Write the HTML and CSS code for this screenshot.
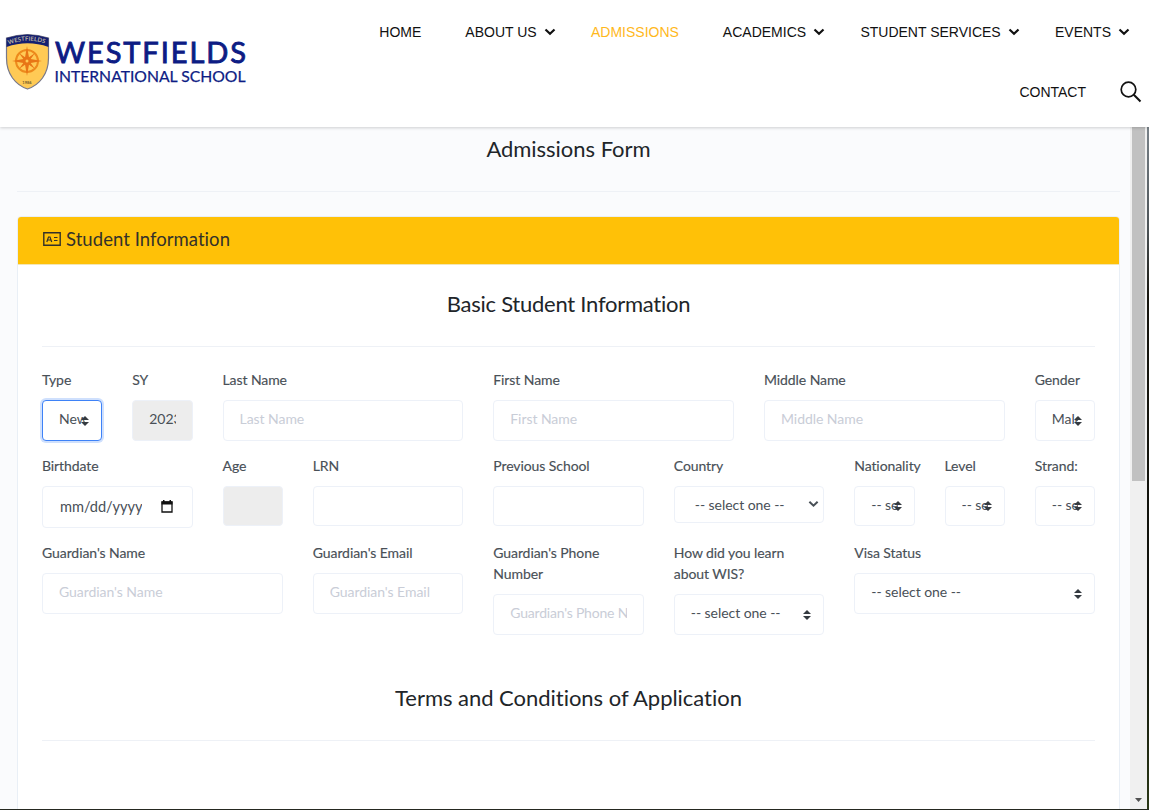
FILE: index.html
```html
<!DOCTYPE html>
<html lang="en">
<head>
<meta charset="utf-8">
<title>Admissions Form</title>
<link rel="stylesheet" href="styles.css">
</head>
<body>
<svg width="0" height="0" class="defs">
  <symbol id="sort" viewBox="0 0 8 10"><path d="M4 0 8 4H0zM0 6h8L4 10z" fill="#343a40"/></symbol>
  <symbol id="chev" viewBox="0 0 12 8"><path d="M1.500 1.500 6 5.800l4.500-4.300" fill="none" stroke="currentColor" stroke-width="2.200"/></symbol>
</svg>
<header class="header">
  <svg class="logo" width="250" height="64" viewBox="0 0 250 64">
    <path d="M6.500 7Q27.500 0 48.500 7V27C48.500 43 39.500 54 27.500 58C15.500 54 6.500 43 6.500 27Z" fill="#ffca55" stroke="#77788a" stroke-width="1.200"/>
    <path d="M6.500 7Q27.500 0 48.500 7V16Q27.500 8.500 6.500 16Z" fill="#152070"/>
    <path id="arc" d="M8.500 13.500Q27.500 6 47.500 13.500" fill="none"/>
    <text class="crest-text" textLength="37" lengthAdjust="spacingAndGlyphs"><textPath href="#arc">WESTFIELDS</textPath></text>
    <circle cx="27" cy="30" r="11" fill="none" stroke="#ed8a1c" stroke-width="2"/>
    <path d="M27 15l2.200 12.800L42 30l-12.800 2.200L27 45l-2.200-12.800L12 30l12.800-2.200z" fill="#e87516"/>
    <path d="M19 22l7 5 1 3-3-1zM35 22l-5 7-3 1 1-3zM19 38l5-7 3-1-1 3zM35 38l-7-5-1-3 3 1z" fill="#e87516"/>
    <circle cx="27" cy="30" r="1.500" fill="#ffca55"/>
    <text x="27" y="53" class="crest-year" text-anchor="middle">1986</text>
    <text x="55" y="31.500" class="logo-a" textLength="191">WESTFIELDS</text>
    <text x="54.500" y="51" class="logo-b" textLength="191" lengthAdjust="spacingAndGlyphs">INTERNATIONAL SCHOOL</text>
  </svg>
  <nav class="nav">
    <div class="nav-row">
      <a class="item">HOME</a>
      <a class="item drop">ABOUT US<svg width="12" height="8"><use href="#chev"/></svg></a>
      <a class="item active">ADMISSIONS</a>
      <a class="item drop">ACADEMICS<svg width="12" height="8"><use href="#chev"/></svg></a>
      <a class="item drop">STUDENT SERVICES<svg width="12" height="8"><use href="#chev"/></svg></a>
      <a class="item drop">EVENTS<svg width="12" height="8"><use href="#chev"/></svg></a>
    </div>
    <div class="nav-row second">
      <a class="item">CONTACT</a>
      <svg class="search" width="22" height="22" viewBox="0 0 22 22"><circle cx="8.500" cy="8.500" r="7.300" fill="none" stroke="#111" stroke-width="1.700"/><path d="M13.800 13.800 20.500 20.500" stroke="#111" stroke-width="2"/></svg>
    </div>
  </nav>
</header>
<div class="view">
  <main class="main">
    <h1 class="title t-adm">Admissions Form</h1>
    <hr class="rule page-rule">
    <section class="card">
      <div class="card-head">
        <svg width="18" height="14" viewBox="0 0 18 14" fill="none" stroke="#33312a"><path d="M.8.8h16.400v12.400H.8z" stroke-width="1.400"/><path d="M3.800 10 5.500 5H7l1.700 5M4.800 8h3" stroke-width="1.200"/><path d="M11 5.500h3.500M11 8.500h3.500" stroke-width="1.200"/></svg>
        <span class="head-text">Student Information</span>
      </div>
      <div class="card-body">
        <h2 class="title t-basic">Basic Student Information</h2>
        <hr class="rule">
        <form class="form">
          <div class="row">
            <div class="f s1"><label>Type</label><div class="c focus"><span class="val">New</span><svg class="sort" width="8" height="10"><use href="#sort"/></svg></div></div>
            <div class="f s1"><label>SY</label><div class="c gray"><span class="val sy">2023</span></div></div>
            <div class="f s3"><label>Last Name</label><input class="c" placeholder="Last Name"></div>
            <div class="f s3"><label>First Name</label><input class="c" placeholder="First Name"></div>
            <div class="f s3"><label>Middle Name</label><input class="c" placeholder="Middle Name"></div>
            <div class="f s1"><label>Gender</label><div class="c"><span class="val">Male</span><svg class="sort" width="8" height="10"><use href="#sort"/></svg></div></div>
          </div>
          <div class="row row2">
            <div class="f s2"><label>Birthdate</label><div class="c date"><span class="val">mm/dd/yyyy</span><svg width="12" height="13" viewBox="0 0 12 13"><path d="M1 2h10v10H1z" fill="none" stroke="#111" stroke-width="1.300"/><path d="M.5 1.500h11v3H.5zM2 0h1.500v2H2zM8.500 0H10v2H8.500z" fill="#111"/></svg></div></div>
            <div class="f s1"><label>Age</label><div class="c gray"></div></div>
            <div class="f s2"><label>LRN</label><input class="c"></div>
            <div class="f s2"><label>Previous School</label><input class="c"></div>
            <div class="f s2"><label>Country</label><div class="c country"><span class="val">-- select one --</span><svg width="11" height="8"><use href="#chev"/></svg></div></div>
            <div class="f s1"><label>Nationality</label><div class="c"><span class="val">-- select one --</span><svg class="sort" width="8" height="10"><use href="#sort"/></svg></div></div>
            <div class="f s1"><label>Level</label><div class="c"><span class="val">-- select one --</span><svg class="sort" width="8" height="10"><use href="#sort"/></svg></div></div>
            <div class="f s1"><label>Strand:</label><div class="c"><span class="val">-- select one --</span><svg class="sort" width="8" height="10"><use href="#sort"/></svg></div></div>
          </div>
          <div class="row">
            <div class="f s3"><label>Guardian's Name</label><input class="c" placeholder="Guardian's Name"></div>
            <div class="f s2"><label>Guardian's Email</label><input class="c" placeholder="Guardian's Email"></div>
            <div class="f s2"><label>Guardian's Phone<br>Number</label><input class="c tight" placeholder="Guardian's Phone Number"></div>
            <div class="f s2"><label>How did you learn<br>about WIS?</label><div class="c"><span class="val">-- select one --</span><svg class="sort" width="8" height="10"><use href="#sort"/></svg></div></div>
            <div class="f s3"><label>Visa Status</label><div class="c"><span class="val">-- select one --</span><svg class="sort" width="8" height="10"><use href="#sort"/></svg></div></div>
          </div>
        </form>
        <h2 class="title t-terms">Terms and Conditions of Application</h2>
        <hr class="rule">
      </div>
    </section>
  </main>
  <div class="scroll"><div class="thumb"></div><svg width="7" height="4"><path d="M0 0h7L3.500 4z" fill="#505050"/></svg></div>
  <div class="edge"></div>
</div>
<div class="bottom"></div>
</body>
</html>
```
FILE: styles.css
```css
* { box-sizing: border-box; }
body { margin: 0; height: 810px; overflow: hidden; display: flex; flex-direction: column; background: #fafbfd; font-family: Lato, sans-serif; color: #212529; }
.defs { position: absolute; }
.header { height: 127px; flex: none; display: flex; justify-content: space-between; background: #fff; box-shadow: 0 1px 3px rgba(0,0,0,.18); position: relative; z-index: 1; }
.logo { margin-top: 31px; flex: none; }
.logo-a { font: 400 29px Lato, sans-serif; fill: #0d1c84; stroke: #0d1c84; stroke-width: .9px; }
.logo-b { font: 400 16px Lato, sans-serif; fill: #0d1c84; stroke: #0d1c84; stroke-width: .25px; }
.crest-text { font: 700 6px Lato, sans-serif; fill: #b9b0a0; }
.crest-year { font: 700 4px Lato, sans-serif; fill: #6b5a2c; }
.nav { font: 14px "Liberation Sans", Arial, sans-serif; color: #111; padding: 2px 0 0; }
.nav-row { height: 60px; display: flex; align-items: center; justify-content: flex-end; padding-right: 19px; }
.nav-row.second { padding-right: 7px; }
.item { white-space: nowrap; display: flex; align-items: center; }
.item + .item { margin-left: 44px; }
.drop svg { margin-left: 7px; }
.drop + .item { margin-left: 35.300px; }
.active { color: #ffb81c; }
.search { margin-left: 34px; }
.view { height: 682px; display: flex; flex: none; overflow: hidden; }
.main { flex: 1; padding: 6px 10px 0 17px; overflow: hidden; min-width: 0; }
.title { margin: 0; font-size: 22px; line-height: 32px; font-weight: 400; text-align: center; white-space: nowrap; letter-spacing: -.03px; }
.t-basic { letter-spacing: -.25px; }
.rule { border: 0; height: 1px; background: #eef1f6; margin: 26px 0 0; }
.page-rule { width: 1103px; }
.card { margin-top: 24px; width: 1103px; height: 700px; border: 1px solid #e9eff6; border-radius: 4px; background: #fff; overflow: hidden; }
.card-head { height: 48px; background: #ffc107; display: flex; align-items: center; padding: 0 0 4px 25px; gap: 5px; border-bottom: 1px solid #f3e6b5; }
.head-text { font-size: 18.500px; color: #33312a; letter-spacing: .05px; }
.card-body { padding: 23px 24px 0; }
.form { margin-top: 22px; height: 267px; }
.row { display: grid; grid-template-columns: repeat(12, minmax(0, 1fr)); column-gap: 30px; height: 86px; }
.row2 { height: 87px; }
.s1 { grid-column: span 1; }
.s2 { grid-column: span 2; }
.s3 { grid-column: span 3; }
label { display: block; font-size: 14px; line-height: 21px; color: #495057; margin-bottom: 10px; white-space: nowrap; letter-spacing: -.08px; -webkit-text-stroke: .15px; }
.c { display: flex; align-items: center; width: 100%; height: 41px; padding: 0 16px 4px; border: 1px solid #edf1f8; border-radius: 4px; background: #fff; font: 14px Lato, sans-serif; letter-spacing: -.05px; color: #495057; outline: 0; position: relative; }
.row2 .c { height: 40px; padding-bottom: 3px; }
.row2 .date { height: 42px; padding-left: 17px; padding-bottom: 2px; font-size: 14.600px; }
.row2 .country { height: 37px; padding: 0 4px 1px 20px; justify-content: space-between; }
.c::placeholder { color: #c9cdd7; opacity: 1; }
.tight { letter-spacing: -.2px; }
.val { overflow: hidden; white-space: nowrap; flex: 0 1 auto; min-width: 0; }
.date { justify-content: space-between; }
.date svg { margin-right: 3px; }
.sort { position: absolute; right: 12px; top: 15px; }
.row2 .sort { top: 14px; }
.focus { border-color: #3e82f7; box-shadow: 0 0 0 2px #cfe0fd; }
.gray { background: #ededed; }
.t-terms { margin-top: 46px; }
.scroll { width: 17px; background: #f0f0f0; display: flex; flex-direction: column; justify-content: space-between; align-items: center; padding-bottom: 7px; }
.thumb { width: 13px; height: 354px; background: #c1c1c1; }
.edge { width: 2px; background: linear-gradient(#788188, #4c5357 15%, #17160f 25%, #10120c 75%, #2a3816); }
.bottom { height: 1px; background: #252820; }
```
